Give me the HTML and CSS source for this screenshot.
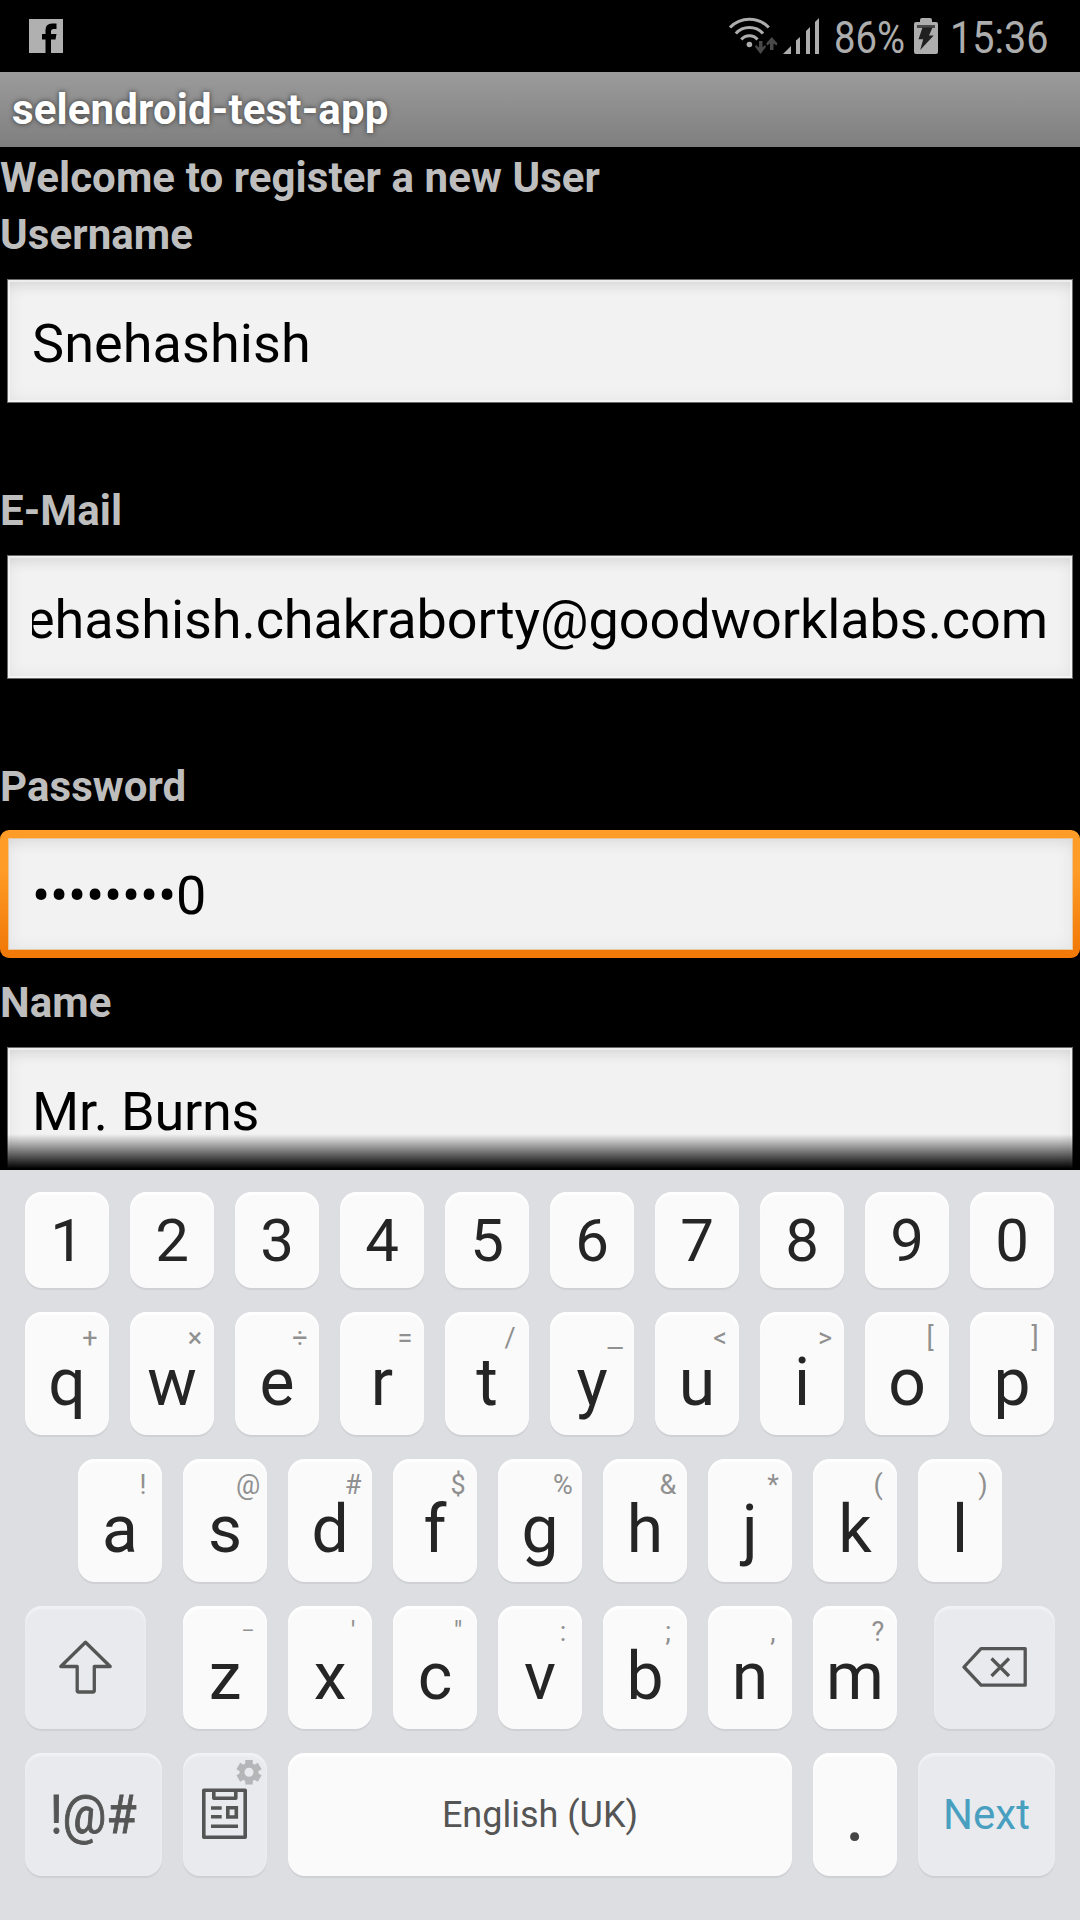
FILE: index.html
```html
<!DOCTYPE html>
<html lang="en">
<head>
<meta charset="utf-8">
<title>selendroid-test-app</title>
<link rel="stylesheet" href="styles.css">
</head>
<body>
<div class="screen">
  <header class="status">
    <svg class="fb" viewBox="0 0 34 34" width="34" height="34"><path fill="#b0b0b0" d="M0 0H34V34H22V20.5H26.5L27.5 15H22V12.500Q22 10 24.500 10H27.500V4.500H23Q16.500 4.500 16.500 11V15H13V20.500H16.500V34H0Z"/></svg>
    <div class="tray">
      <svg viewBox="728 0 50 72" width="50" height="72">
        <g fill="none" stroke="#adadad" stroke-width="3.100"><path d="M730 27.500A27 27 0 0 1 768.800 27.500"/><path d="M735.800 33.500A18.500 18.500 0 0 1 763 33.500"/><path d="M741.300 39.500A10.500 10.500 0 0 1 757.500 39.500"/></g>
        <circle cx="749.400" cy="44.500" r="2.800" fill="#adadad"/>
        <path fill="#484848" d="M759 41h3.500v6.500l2.500-2.500 1 1.800-5.500 7.200-5.500-7.200 1-1.800 3 2.500zM770 50h3.500v-6.500l3 2 1-2-5.800-6.500-5.500 6.500 1 2 2.800-2z"/>
      </svg>
      <svg class="signal" viewBox="783 0 36 72" width="36" height="72"><path fill="#adadad" d="M783 54l8-8v8zM796 54V40.500l4-3.500v17zM806 54V31l4-4v27zM815 54V22l4-4v36z"/></svg>
      <svg class="percent" width="72" height="72"><text x="0" y="53" textLength="71" lengthAdjust="spacingAndGlyphs">86%</text></svg>
      <svg class="battery" viewBox="914 0 24 72" width="24" height="72"><path fill="#adadad" d="M916 22h4v-2q0-2 2-2h8q2 0 2 2v2h4q2 0 2 2v28q0 2-2 2h-20q-2 0-2-2v-28q0-2 2-2z"/><path fill="#484848" d="M917 25h18v3h-18z"/><path fill="#202020" d="M922.500 27.500h10l-3.500 8h4.700L920.200 50l3-10.700h-4.700z"/></svg>
      <svg class="clock" width="98" height="72"><text x="-1" y="53" textLength="98.500" lengthAdjust="spacingAndGlyphs">15:36</text></svg>
    </div>
  </header>
  <div class="title">selendroid-test-app</div>
  <main class="form">
    <div class="label">Welcome to register a new User</div>
    <div class="label">Username</div>
    <div class="field"><div class="value name">Snehashish</div></div>
    <div class="label spaced">E-Mail</div>
    <div class="field"><div class="value scrolled"><span>ehashish.chakraborty@goodworklabs.com</span></div></div>
    <div class="label spaced">Password</div>
    <div class="focus"><div class="field inner"><div class="value tight">••••••••0</div></div></div>
    <div class="label after-focus">Name</div>
    <div class="field"><div class="value tight">Mr. Burns</div></div>
    <div class="fade"></div>
  </main>
  <section class="keyboard">
    <div class="row digits">
      <div class="key">1</div><div class="key">2</div><div class="key">3</div><div class="key">4</div><div class="key">5</div><div class="key">6</div><div class="key">7</div><div class="key">8</div><div class="key">9</div><div class="key">0</div>
    </div>
    <div class="row">
      <div class="key">q<i>+</i></div><div class="key">w<i>×</i></div><div class="key">e<i>÷</i></div><div class="key">r<i>=</i></div><div class="key">t<i>/</i></div><div class="key">y<i class="under">_</i></div><div class="key">u<i>&lt;</i></div><div class="key">i<i>&gt;</i></div><div class="key">o<i>[</i></div><div class="key">p<i>]</i></div>
    </div>
    <div class="row home">
      <div class="key">a<i>!</i></div><div class="key">s<i>@</i></div><div class="key">d<i>#</i></div><div class="key">f<i>$</i></div><div class="key">g<i>%</i></div><div class="key">h<i>&amp;</i></div><div class="key">j<i>*</i></div><div class="key">k<i>(</i></div><div class="key">l<i>)</i></div>
    </div>
    <div class="row">
      <div class="key fn shift"><svg viewBox="25 1606 121 123" width="121" height="123"><path class="line" d="M85.500 1642.200L60.800 1666.500H77.200V1690.500Q77.200 1692 78.700 1692H92.800Q94.300 1692 94.300 1690.500V1666.500H110.200Z"/></svg></div>
      <div class="key">z<i class="dash">–</i></div><div class="key">x<i>'</i></div><div class="key">c<i>"</i></div><div class="key">v<i>:</i></div><div class="key">b<i>;</i></div><div class="key">n<i>,</i></div><div class="key">m<i>?</i></div>
      <div class="key fn back"><svg viewBox="934 1606 121 123" width="121" height="123"><path class="line" d="M964 1667L981 1648.700H1025.200V1685.200H981ZM991.500 1658.500L1009 1676M1009 1658.500L991.500 1676"/></svg></div>
    </div>
    <div class="row">
      <div class="key fn wide sym"><svg width="137" height="123"><text x="25" y="79.500" textLength="86.500" lengthAdjust="spacingAndGlyphs">!@#</text></svg></div>
      <div class="key fn"><svg viewBox="183 1753 84 123" width="84" height="123">
        <g fill="none" stroke="#555" stroke-width="3.600" stroke-linejoin="round"><path d="M203.800 1790.300H245.200V1837.300H203.800ZM213.800 1790.300V1798.200H235.800V1790.300"/><path stroke-linejoin="miter" d="M211 1808H221.700M211 1816.700H221.700M227.800 1807.800H236.300V1817H227.800ZM211 1826.200H238"/></g>
        <g fill="none" stroke="#b5b6b8"><circle cx="249" cy="1772.300" r="7" stroke-width="5"/><path stroke-width="7.500" stroke-linecap="butt" d="M249 1760V1766M249 1778.600V1784.600M238.300 1766.100L243.500 1769.100M254.500 1775.500L259.700 1778.500M238.300 1778.500L243.500 1775.500M254.500 1769.100L259.700 1766.100"/></g>
      </svg></div>
      <div class="key space">English (UK)</div>
      <div class="key dot">.</div>
      <div class="key fn wide next">Next</div>
    </div>
  </section>
</div>
</body>
</html>
```
FILE: styles.css
```css
* { box-sizing: border-box; }
body { margin: 0; background: #000; font-family: Roboto, "Liberation Sans", sans-serif; }
svg { display: block; flex: none; overflow: visible; }
.screen { width: 1080px; height: 1920px; display: flex; flex-direction: column; overflow: hidden; }

.status { height: 72px; display: flex; align-items: center; justify-content: space-between; padding: 0 31px 0 29px; }
.tray { display: flex; font-size: 45px; }
.tray text { fill: #adadad; }
.signal { margin-left: 5px; }
.percent { margin-left: 15px; }
.battery { margin-left: 8px; }
.clock { margin-left: 13px; }

.title { height: 75px; padding-left: 12px; background: linear-gradient(#9b9b9b, #7f7f7f); color: #fff; font-size: 42px; font-weight: 700; line-height: 75px; letter-spacing: 0.13px; text-shadow: 0 0 5px #333; }

.form { position: relative; height: 1023px; overflow: hidden; display: flex; flex-direction: column; }
.label { flex: none; height: 57px; line-height: 61px; color: #bebebe; font-size: 42px; font-weight: 700; letter-spacing: 0.08px; }
.spaced { margin-top: 78px; }
.after-focus { margin-top: 14px; }
.field { flex: none; height: 122px; margin: 19px 8px 0; padding: 0 24px; background: #f2f2f2; box-shadow: 0 0 0 1px #6b6b6b, inset 0 0 0 2px #ffffff80, inset 0 0 18px #00000012, inset 0 14px 14px -8px #00000014; }
.value { height: 100%; overflow: hidden; font-size: 54px; line-height: 127px; white-space: nowrap; color: #000; }
.name { letter-spacing: 0.08px; }
.tight { letter-spacing: -0.22px; }
.scrolled { display: flex; justify-content: flex-end; letter-spacing: -0.08px; }
.focus { flex: none; height: 128px; margin-top: 17px; padding: 8px 7px 8px 8px; border-radius: 9px; background: linear-gradient(#ff9c27 30%, #f27a09 92%); }
.inner { height: 112px; margin: 0; box-shadow: inset 0 0 0 1px #e6c79f, inset 0 0 18px #00000012, inset 0 14px 14px -8px #0000000d; }
.inner .value { line-height: 116px; }
.fade { position: absolute; left: 0; right: 0; bottom: 0; height: 36px; background: linear-gradient(#0000, #000 96%); }

.keyboard { flex: 1; padding: 22px 25px 44px; display: flex; flex-direction: column; gap: 24px; background: #dddee2; }
.row { display: flex; gap: 21px; height: 123px; }
.home { padding-left: 53px; }
.digits { height: 96px; }
.key { position: relative; flex: none; width: 84px; border-radius: 17px; background: #fafafa; color: #252525; box-shadow: 0 2px 1px #cfd0d4, inset 0 3px 2px #fff; font-size: 66px; line-height: 141px; text-align: center; white-space: nowrap; }
.digits .key { font-size: 60px; line-height: 97px; }
.key i { position: absolute; top: 0; right: -1px; width: 40px; font-style: normal; font-size: 27px; line-height: 53px; color: #909090; }
.key .under { transform: scaleX(1.25); }
.key .dash { font-size: 20px; line-height: 50px; }
.fn { background: #e9eaee; box-shadow: 0 2px 1px #cfd0d4, inset 0 3px 2px #f1f2f5; }
.shift { width: 121px; margin-right: 16px; }
.back { width: 121px; margin-left: 16px; }
.line { fill: none; stroke: #555; stroke-width: 3.300px; stroke-linejoin: round; }
.wide { width: 137px; }
.sym { font-size: 54px; }
.sym text { fill: #555; stroke: #555; stroke-width: 0.9px; text-anchor: start; }
.space { width: 504px; font-size: 36px; line-height: 125px; color: #555; }
.dot { color: #444; font-size: 80px; line-height: 123px; }
.next { color: #489fc0; font-size: 42px; line-height: 123px; }
```
